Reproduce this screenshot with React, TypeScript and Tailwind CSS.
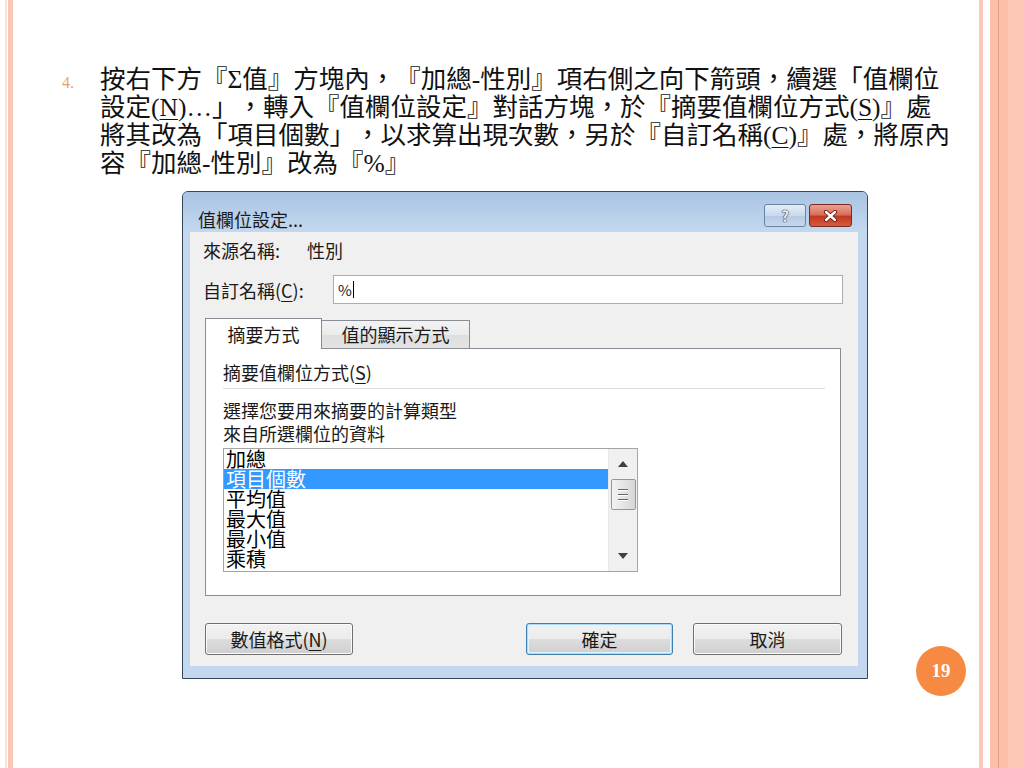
import React from 'react';

const serifStack = "[font-family:'Liberation_Serif','Noto_Sans_CJK_TC',serif]";

function U({ children }: { children: React.ReactNode }) {
  return <span className="underline underline-offset-[3px] decoration-1">{children}</span>;
}

function LeftEdge() {
  return (
    <div className="flex h-full shrink-0">
      <div className="w-[5px]" />
      <div className="w-[2px] bg-[#f8e4d4]" />
      <div className="w-[1px]" />
      <div className="w-[5px] bg-[#fcc6b6]" />
    </div>
  );
}

function RightEdge() {
  return (
    <div className="flex h-full shrink-0">
      <div className="w-[4px] bg-[#fbc7b7]" />
      <div className="w-[7px]" />
      <div className="w-[8px] bg-[#fbbfaa]" />
      <div className="w-[1px] bg-[#e4a084]" />
      <div className="w-[9px] bg-[#fbbfaa]" />
      <div className="w-[16px] bg-[#fdc9b6]" />
    </div>
  );
}

function Instruction() {
  return (
    <div className={`flex items-baseline pt-[66px] pl-[49px] ${serifStack}`}>
      <span className="w-[38px] shrink-0 text-[16px] text-[#e2a274]">4.</span>
      <p className="text-[25.5px] leading-[28px] text-[#111] whitespace-nowrap [text-spacing-trim:space-all]">
        按右下方『Σ值』方塊內，『加總-性別』項右側之向下箭頭，續選「值欄位
        <br />
        設定(<U>N</U>)…」，轉入『值欄位設定』對話方塊，於『摘要值欄位方式(<U>S</U>)』處
        <br />
        將其改為「項目個數」，以求算出現次數，另於『自訂名稱(<U>C</U>)』處，將原內
        <br />
        容『加總-性別』改為『%』
      </p>
    </div>
  );
}

function WinButton({ label, width, primary }: { label: React.ReactNode; width: string; primary?: boolean }) {
  return (
    <div
      className={`${width} h-[32px] rounded-[3px] border flex items-center justify-center text-[18px] leading-none bg-[linear-gradient(to_bottom,#f2f2f2_0%,#ebebeb_50%,#dddddd_51%,#cfcfcf_100%)] ${
        primary
          ? 'border-[#3c7fb1] shadow-[inset_0_0_0_1px_#a9dcf7,inset_0_0_0_2px_#e2f3fc]'
          : 'border-[#707070] shadow-[inset_0_0_0_1px_#fbfbfb]'
      }`}
    >
      {label}
    </div>
  );
}

function ListBox() {
  const items = ['加總', '項目個數', '平均值', '最大值', '最小值', '乘積'];
  return (
    <div className="mt-[3px] w-[415px] h-[124px] border border-[#a5a5a5] bg-white flex">
      <div className="flex-1 flex flex-col text-[20px] leading-[20px] text-black">
        {items.map((it, i) => (
          <div key={it} className={i === 1 ? 'bg-[#3399ff] text-white pl-[2px] h-[20px]' : 'pl-[2px] h-[20px]'}>
            {it}
          </div>
        ))}
      </div>
      <div className="w-[29px] bg-[#f0f0f0] border-l border-[#e8e8e8] flex flex-col items-center">
        <div className="h-[30px] flex items-center justify-center">
          <svg width="10" height="6" viewBox="0 0 10 6">
            <path d="M0 6 L5 0 L10 6 Z" fill="#404040" />
          </svg>
        </div>
        <div className="w-[25px] h-[31px] rounded-[2px] border border-[#979797] bg-[linear-gradient(to_right,#f3f3f3,#e2e2e2_60%,#d6d6d6)] flex flex-col items-center justify-center gap-[3px]">
          <div className="w-[10px] h-[2px] bg-[#666] border-b border-white" />
          <div className="w-[10px] h-[2px] bg-[#666] border-b border-white" />
          <div className="w-[10px] h-[2px] bg-[#666] border-b border-white" />
        </div>
        <div className="flex-1" />
        <div className="h-[30px] flex items-center justify-center">
          <svg width="10" height="6" viewBox="0 0 10 6">
            <path d="M0 0 L10 0 L5 6 Z" fill="#404040" />
          </svg>
        </div>
      </div>
    </div>
  );
}

function Dialog() {
  return (
    <div className="ml-[169px] mt-[13px] w-[686px] h-[488px] shrink-0 border border-[#37475a] rounded-t-[6px] bg-[#c3d8ef] flex flex-col text-[#1a1a1a] [font-family:'Noto_Sans_CJK_TC',sans-serif]">
      {/* title bar */}
      <div className="h-[40px] flex items-start rounded-t-[5px] bg-[linear-gradient(to_bottom,#a9c3e2,#b9d0ea_60%,#c3d8ef)]">
        <span className="ml-[15px] mt-[17px] text-[18px] leading-[20px]">值欄位設定...</span>
        <div className="ml-auto mr-[15px] mt-[12px] flex gap-[3px]">
          <div className="w-[42px] h-[23px] rounded-[3px] border border-[#6b83a3] bg-[linear-gradient(to_bottom,#e4edf7,#c9d9ec_50%,#b4c9e3_51%,#c6d8ee)] flex items-center justify-center">
            <span className="text-[15px] leading-none font-bold text-[#e9eef5] [text-shadow:0_0_1px_#2d3e58,0_0_1px_#2d3e58,0_0_1px_#2d3e58]">?</span>
          </div>
          <div className="w-[43px] h-[23px] rounded-[3px] border border-[#7a2a1f] bg-[linear-gradient(to_bottom,#eba190,#d9705b_45%,#c4391f_55%,#d45b40)] flex items-center justify-center">
            <svg width="15" height="12" viewBox="0 0 15 12">
              <path d="M3 2 L12 10 M12 2 L3 10" stroke="#6a1d12" strokeWidth="4.2" strokeLinecap="round" />
              <path d="M3 2 L12 10 M12 2 L3 10" stroke="#ffffff" strokeWidth="2.4" strokeLinecap="round" />
            </svg>
          </div>
        </div>
      </div>

      {/* client area */}
      <div className="flex">
        <div className="w-[7px]" />
        <div className="w-[668px] h-[434px] bg-[#f0f0f0] flex flex-col text-[18px]">
          <div className="pt-[6px] pl-[13px] flex leading-[24px]">
            <span className="w-[104px]">來源名稱:</span>
            <span>性別</span>
          </div>

          <div className="mt-[13px] pl-[13px] flex items-center h-[29px]">
            <span className="w-[130px] leading-[24px]">
              自訂名稱(<U>C</U>):
            </span>
            <div className="w-[510px] h-[29px] border border-[#abadb3] bg-white flex items-center pl-[4px]">
              <span className="text-[15px] leading-none">%</span>
              <span className="w-px h-[17px] bg-black ml-[1px]" />
            </div>
          </div>

          <div className="mt-[14px] ml-[15px] h-[31px] flex items-end relative z-10">
            <div className="w-[117px] h-[31px] bg-white border border-b-0 border-[#898c95] flex items-center justify-center">
              摘要方式
            </div>
            <div className="w-[148px] h-[28px] mb-[1px] border border-l-0 border-b-0 border-[#898c95] bg-[linear-gradient(to_bottom,#f3f3f3,#ebebeb_50%,#dedede_51%,#e3e3e3)] flex items-center justify-center">
              值的顯示方式
            </div>
          </div>

          <div className="-mt-[1px] ml-[15px] w-[636px] h-[248px] border border-[#898c95] bg-white flex flex-col pl-[17px] pt-[11px]">
            <div className="leading-[24px]">
              摘要值欄位方式(<U>S</U>)
            </div>
            <div className="mt-[4px] h-px w-[602px] bg-[#d8dde3]" />
            <div className="mt-[10px] leading-[23px]">
              選擇您要用來摘要的計算類型
              <br />
              來自所選欄位的資料
            </div>
            <ListBox />
          </div>

          <div className="mt-[27px] flex items-center pl-[15px] pr-[16px]">
            <WinButton width="w-[148px]" label={<span>數值格式(<U>N</U>)</span>} />
            <div className="flex-1" />
            <WinButton width="w-[147px]" label="確定" primary />
            <div className="w-[20px]" />
            <WinButton width="w-[149px]" label="取消" />
          </div>
        </div>
        <div className="w-[9px]" />
      </div>
    </div>
  );
}

function PageNumber() {
  return (
    <div className="ml-[48px] mt-[468px] w-[50px] h-[50px] shrink-0 rounded-full bg-[#f68a42] flex items-center justify-center">
      <span className="text-white text-[19px] font-bold [font-family:'Liberation_Serif',serif]">19</span>
    </div>
  );
}

export default function App() {
  return (
    <div className="flex w-[1024px] h-[768px] bg-white overflow-hidden">
      <LeftEdge />
      <main className="flex-1 flex flex-col min-w-0">
        <Instruction />
        <div className="flex items-start">
          <Dialog />
          <PageNumber />
        </div>
      </main>
      <RightEdge />
    </div>
  );
}
